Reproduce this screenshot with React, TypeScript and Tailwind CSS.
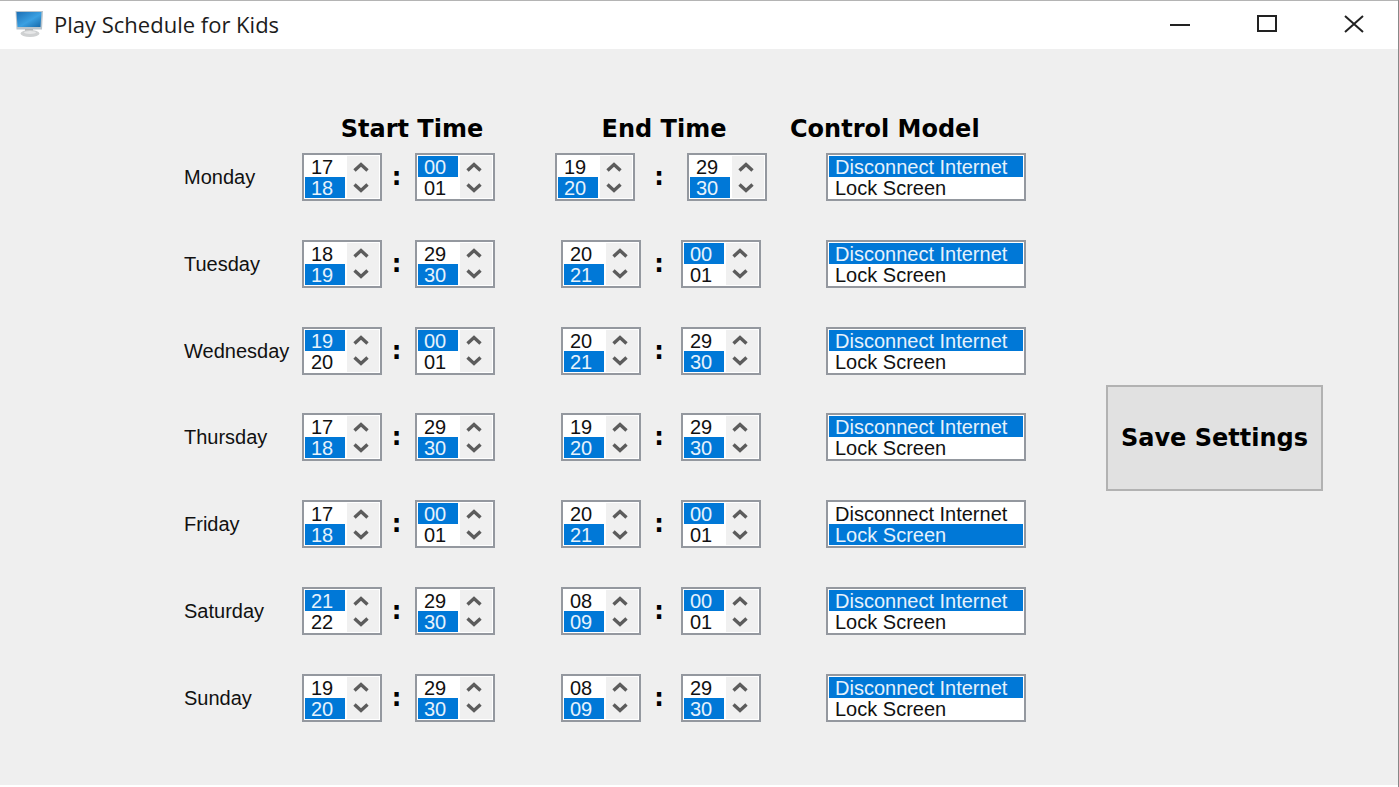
import { useState } from "react";

type Picker = { first: number; value: number };
type Day = {
  name: string;
  start: [Picker, Picker];
  end: [Picker, Picker];
  mode: string;
  wide?: boolean;
};

const MODES = ["Disconnect Internet", "Lock Screen"];

const p = (first: number, value: number): Picker => ({ first, value });

const DAYS: Day[] = [
  { name: "Monday", start: [p(17, 18), p(0, 0)], end: [p(19, 20), p(29, 30)], mode: MODES[0], wide: true },
  { name: "Tuesday", start: [p(18, 19), p(29, 30)], end: [p(20, 21), p(0, 0)], mode: MODES[0] },
  { name: "Wednesday", start: [p(19, 19), p(0, 0)], end: [p(20, 21), p(29, 30)], mode: MODES[0] },
  { name: "Thursday", start: [p(17, 18), p(29, 30)], end: [p(19, 20), p(29, 30)], mode: MODES[0] },
  { name: "Friday", start: [p(17, 18), p(0, 0)], end: [p(20, 21), p(0, 0)], mode: MODES[1] },
  { name: "Saturday", start: [p(21, 21), p(29, 30)], end: [p(8, 9), p(0, 0)], mode: MODES[0] },
  { name: "Sunday", start: [p(19, 20), p(29, 30)], end: [p(8, 9), p(29, 30)], mode: MODES[0] },
];

const pad = (n: number) => String(n).padStart(2, "0");

// The gradient and text-fill beat the browser's own grey for a selected option.
const optionClass =
  "h-[21px] min-h-0 p-0 px-1.5 text-xl leading-[21px] checked:bg-[linear-gradient(#0078d7,#0078d7)] checked:[-webkit-text-fill-color:#e6f2fc]";
const selectClass =
  "block h-[42px] appearance-none overflow-hidden bg-white p-0 text-[#111] outline-none [scrollbar-width:none]";

function Arrow({ up }: { up?: boolean }) {
  return (
    <svg width="16" height="12" viewBox="0 0 16 12" fill="none" stroke="#5c5c5c" strokeWidth="3.4">
      <path d={up ? "M1.5 9.5 8 3.5 14.5 9.5" : "M1.5 2.5 8 8.5 14.5 2.5"} />
    </svg>
  );
}

function NumberList({ label, initial, max }: { label: string; initial: Picker; max: number }) {
  const [{ first, value }, setState] = useState(initial);
  const scroll = (by: number) =>
    setState((s) => ({ ...s, first: Math.min(Math.max(s.first + by, 0), max - 1) }));

  return (
    <div className="flex w-20 shrink-0 border-2 border-[#94989f] bg-white p-px">
      <select
        size={2}
        aria-label={label}
        value={value}
        onChange={(e) => setState({ first, value: Number(e.target.value) })}
        className={`${selectClass} w-10`}
      >
        {[first, first + 1].map((n) => (
          <option key={n} value={n} className={optionClass}>
            {pad(n)}
          </option>
        ))}
      </select>
      <div className="ml-0.5 flex flex-1 flex-col bg-[#f0f0f0] pr-1">
        <button
          type="button"
          aria-label={`${label} up`}
          onClick={() => scroll(-1)}
          className="flex flex-1 items-center justify-center"
        >
          <Arrow up />
        </button>
        <button
          type="button"
          aria-label={`${label} down`}
          onClick={() => scroll(1)}
          className="flex flex-1 items-center justify-center"
        >
          <Arrow />
        </button>
      </div>
    </div>
  );
}

function Colon({ className }: { className: string }) {
  return (
    <span
      className={`${className} shrink-0 pr-1 text-center font-['DejaVu_Sans',sans-serif] text-2xl leading-6 font-bold text-black`}
    >
      :
    </span>
  );
}

function DayRow({ day }: { day: Day }) {
  const [mode, setMode] = useState(day.mode);
  return (
    <div className="grid grid-cols-[118px_254px_270px_200px] items-center">
      <div className="text-xl leading-6">{day.name}</div>
      <div className="flex items-center">
        <NumberList label={`${day.name} start hour`} initial={day.start[0]} max={23} />
        <Colon className="w-[33px]" />
        <NumberList label={`${day.name} start minute`} initial={day.start[1]} max={59} />
      </div>
      <div className="flex w-[210px] items-center justify-center">
        <NumberList label={`${day.name} end hour`} initial={day.end[0]} max={23} />
        <Colon className={day.wide ? "w-[52px]" : "w-10"} />
        <NumberList label={`${day.name} end minute`} initial={day.end[1]} max={59} />
      </div>
      <div className="border-2 border-[#94989f] bg-white p-px">
        <select
          size={2}
          aria-label={`${day.name} control model`}
          value={mode}
          onChange={(e) => setMode(e.target.value)}
          className={`${selectClass} w-full`}
        >
          {MODES.map((m) => (
            <option key={m} className={optionClass}>
              {m}
            </option>
          ))}
        </select>
      </div>
    </div>
  );
}

function TitleBar() {
  return (
    <header className="flex h-[49px] items-center border-t border-[#b4b4b4] bg-white pr-px pb-0.5 pl-[15px]">
      <svg width="28" height="28" viewBox="0 0 28 28">
        <defs>
          <linearGradient id="screen" x1="0" y1="0" x2="1" y2="1">
            <stop offset="0" stopColor="#1c6fb5" />
            <stop offset="0.55" stopColor="#3aa0e2" />
            <stop offset="1" stopColor="#1467a8" />
          </linearGradient>
        </defs>
        <path d="M0.5 1h27.5l-1 18.500H1.500z" fill="#b9c4cc" />
        <path d="M1.500 2h25l-1 15H2.500z" fill="url(#screen)" />
        <path d="M10 19h8v3h-8z" fill="#b3b6b8" />
        <ellipse cx="15" cy="23.500" rx="9.500" ry="3.500" fill="#cfd1d2" />
        <ellipse cx="15" cy="22.500" rx="6" ry="1.500" fill="#e6e7e8" />
      </svg>
      <h1 className="ml-[11px] flex-1 font-['Open_Sans',sans-serif] text-[22px] leading-7 text-[#1c1c1c]">
        Play Schedule for Kids
      </h1>
      <button type="button" aria-label="Minimize" className="flex h-full w-[87px] items-center justify-center">
        <svg width="20" height="20" viewBox="0 0 20 20" stroke="#222" strokeWidth="2">
          <path d="M0 11h20" />
        </svg>
      </button>
      <button type="button" aria-label="Maximize" className="flex h-full w-[87px] items-center justify-center">
        <svg width="20" height="20" viewBox="0 0 20 20" fill="none" stroke="#222" strokeWidth="2">
          <path d="M1 2h18v15H1z" />
        </svg>
      </button>
      <button type="button" aria-label="Close" className="flex h-full w-[87px] items-center justify-center">
        <svg width="20" height="20" viewBox="0 0 20 20" stroke="#222" strokeWidth="2">
          <path d="M1 2l18 16M19 2 1 18" />
        </svg>
      </button>
    </header>
  );
}

export default function App() {
  return (
    <div className="flex min-h-screen flex-col border-r border-[#888] bg-[#efefef] font-['Liberation_Sans',Arial,sans-serif] text-[#111]">
      <TitleBar />
      <form
        className="flex flex-1 justify-between border-b-2 border-white pt-16 pr-[75px] pb-[63px] pl-46"
        onSubmit={(e) => e.preventDefault()}
      >
        <div className="flex flex-col">
          <div className="mb-2 grid grid-cols-[118px_254px_270px_200px] font-['DejaVu_Sans',sans-serif] text-2xl leading-8 font-bold text-black">
            <h2 className="col-start-2 w-[220px] text-center">Start Time</h2>
            <h2 className="w-[216px] text-center">End Time</h2>
            <h2 className="-ml-9 whitespace-nowrap">Control Model</h2>
          </div>
          <div className="flex flex-1 flex-col justify-between gap-4">
            {DAYS.map((day) => (
              <DayRow key={day.name} day={day} />
            ))}
          </div>
        </div>
        <button
          type="submit"
          className="mt-10 h-[106px] w-[217px] self-center border-2 border-[#b2b2b2] bg-[#e1e1e1] font-['DejaVu_Sans',sans-serif] text-2xl font-bold text-black"
        >
          Save Settings
        </button>
      </form>
    </div>
  );
}
